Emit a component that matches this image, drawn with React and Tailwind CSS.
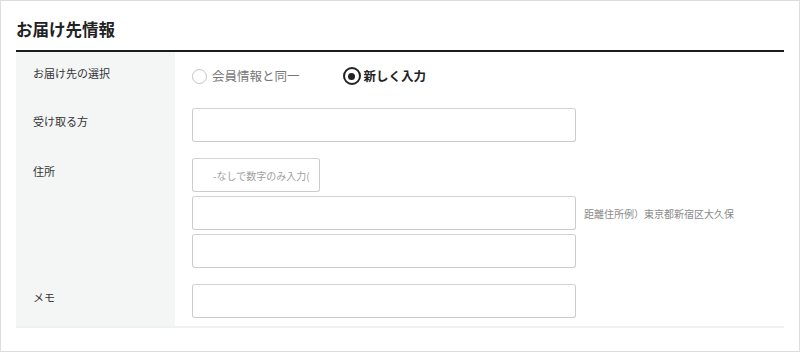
import React from "react";

const font = { fontFamily: '"Noto Sans CJK JP", "Noto Sans", sans-serif' };

function Row({ label, children, className = "" }) {
  return (
    <div className="flex">
      <div className="w-[159px] shrink-0 bg-[#f4f5f5] pl-[17px] pt-[13px] text-[11px] leading-[16px] text-[#333]">
        {label}
      </div>
      <div className={"flex-1 pl-[17px] py-[8px] " + className}>{children}</div>
    </div>
  );
}

function Input({ w = "w-[384px]", placeholder = "" }) {
  return (
    <div
      className={
        w +
        " h-[34px] rounded-[3px] border border-[#cccccc] border-t-[#d4d4d4] bg-white flex items-center pl-[20px] text-[10px] text-[#a0a0a0]"
      }
    >
      {placeholder}
    </div>
  );
}

export default function App() {
  return (
    <div style={font} className="w-[800px] h-[352px] border border-[#dddddd] bg-white px-[15px]">
      <div className="pt-[16px] pb-[9px] text-[16.5px] leading-[24px] font-bold text-[#222]">
        お届け先情報
      </div>
      <div className="border-t-2 border-[#1c1c1c]">
        <div className="border-b-2 border-[#f0f0f0]">
          <Row label="お届け先の選択">
            <div className="h-[32px] flex items-center">
              <span className="w-[15px] h-[15px] rounded-full border border-[#c4c4c4] bg-white" />
              <span className="ml-[5px] text-[12.5px] text-[#777]">会員情報と同一</span>
              <span className="ml-[43px] w-[18px] h-[18px] rounded-full border-2 border-[#222] flex items-center justify-center">
                <span className="w-[7px] h-[7px] rounded-full bg-[#222]" />
              </span>
              <span className="ml-[3px] text-[12.5px] font-semibold text-[#222]">新しく入力</span>
            </div>
          </Row>
          <Row label="受け取る方">
            <Input />
          </Row>
          <Row label="住所">
            <div className="flex flex-col gap-[4px]">
              <Input w="w-[128px]" placeholder="-なしで数字のみ入力(" />
              <div className="flex items-center">
                <Input />
                <span className="ml-[8px] text-[10px] text-[#8a8a8a]">距離住所例）東京都新宿区大久保</span>
              </div>
              <Input />
            </div>
          </Row>
          <Row label="メモ">
            <Input />
          </Row>
        </div>
      </div>
    </div>
  );
}
